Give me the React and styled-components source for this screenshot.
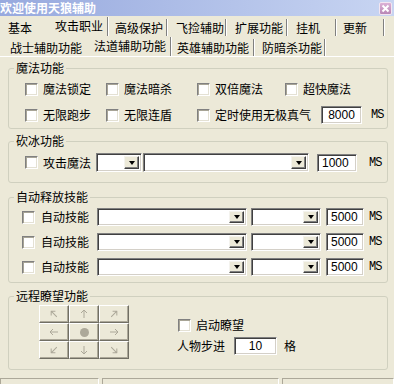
import React from 'react';
import styled, { createGlobalStyle } from 'styled-components';

const GlobalStyle = createGlobalStyle`
  html, body {
    margin: 0;
    padding: 0;
    background: #ece9d8;
  }
  body {
    font-family: "Noto Sans CJK SC", "Noto Sans", sans-serif;
    font-size: 12px;
    color: #000;
  }
`;

const Window = styled.div`
  width: 394px;
  height: 384px;
  overflow: hidden;
  display: flex;
  flex-direction: column;
  background: #ece9d8;
`;

const TitleBar = styled.div`
  flex: none;
  height: 16px;
  display: flex;
  align-items: center;
  justify-content: space-between;
  padding-right: 2px;
  background: linear-gradient(to right, #97a9de, #c8d5f2);
  color: #fff;
  font-weight: bold;
  font-size: 12px;
  line-height: 16px;
`;

const CloseButton = styled.div`
  width: 13px;
  height: 13px;
  box-sizing: border-box;
  display: flex;
  align-items: center;
  justify-content: center;
  border: 1px solid #f3e6f1;
  border-radius: 2px;
  background: linear-gradient(#dcb2d6, #b887b6);
`;

const TabBar = styled.div`
  flex: none;
  height: 20px;
  display: flex;
  align-items: flex-end;
`;

const Tab = styled.div`
  flex: none;
  box-sizing: border-box;
  width: ${(p) => p.$w}px;
  height: ${(p) => (p.$selected ? 19 : 17)}px;
  padding-left: ${(p) => p.$pad}px;
  line-height: 17px;
  white-space: nowrap;
  border-right: ${(p) => (p.$sep ? '1px solid #fff' : 'none')};
  box-shadow: ${(p) => (p.$sep ? 'inset -1px 0 #808080' : 'none')};
`;

const Content = styled.div`
  display: flex;
  flex-direction: column;
  padding-left: 8px;
  border-top: 1px solid #fff;
`;

const Group = styled.fieldset`
  flex: none;
  margin: ${(p) => p.$top}px 0 0 0;
  width: 380px;
  height: ${(p) => p.$h}px;
  box-sizing: border-box;
  padding: ${(p) => p.$pt}px 0 0 0;
  border: 1px solid #d0d0bf;
  border-radius: 3px;
  min-width: 0;
`;

const Legend = styled.legend`
  margin-left: 5px;
  padding: 0 2px;
  font-size: 12px;
  line-height: 14px;
`;

const Row = styled.div`
  display: flex;
  align-items: center;
  height: ${(p) => p.$h || 18}px;
  padding-left: ${(p) => p.$indent || 0}px;
  margin-top: ${(p) => p.$gap || 0}px;
`;

const CheckItem = styled.label`
  flex: none;
  display: flex;
  align-items: center;
  gap: ${(p) => p.$gap || 5}px;
  width: ${(p) => (p.$w ? `${p.$w}px` : 'auto')};
  margin-left: ${(p) => p.$ml || 0}px;
  white-space: nowrap;
  line-height: 16px;
`;

const Box = styled.span`
  flex: none;
  width: 13px;
  height: 13px;
  box-sizing: border-box;
  background: #fff;
  border: 1px solid;
  border-color: #808080 #fff #fff #808080;
  box-shadow: inset 1px 1px #a7a496, inset -1px -1px #e4e1d4;
`;

const Field = styled.div`
  flex: none;
  box-sizing: border-box;
  width: ${(p) => p.$w}px;
  height: ${(p) => p.$h || 18}px;
  margin-left: ${(p) => p.$ml || 0}px;
  padding: 0 4px;
  background: #fff;
  border: 1px solid;
  border-color: #808080 #fff #fff #808080;
  box-shadow: inset 1px 1px #404040, inset -1px -1px #d4d0c8;
  font-family: "Liberation Sans Narrow", "Liberation Sans", Arial, sans-serif;
  font-size: 12px;
  line-height: 16px;
  text-align: ${(p) => p.$align || 'left'};
`;

const Combo = styled.div`
  flex: none;
  box-sizing: border-box;
  width: ${(p) => p.$w}px;
  height: ${(p) => p.$h || 18}px;
  margin-left: ${(p) => p.$ml || 0}px;
  display: flex;
  justify-content: flex-end;
  padding: 2px;
  background: #fff;
  border: 1px solid;
  border-color: #808080 #fff #fff #808080;
  box-shadow: inset 1px 1px #404040, inset -1px -1px #d4d0c8;
`;

const DropButton = styled.div`
  width: 15px;
  height: 100%;
  box-sizing: border-box;
  display: flex;
  align-items: center;
  justify-content: center;
  background: #ece9d8;
  border: 1px solid;
  border-color: #f4f3ee #404040 #404040 #f4f3ee;
  box-shadow: inset -1px -1px #808080;

  &::after {
    content: '';
    width: 0;
    height: 0;
    border-left: 3.5px solid transparent;
    border-right: 3.5px solid transparent;
    border-top: 4px solid #000;
  }
`;

const Unit = styled.span`
  flex: none;
  margin-left: ${(p) => p.$ml || 0}px;
  font-family: "Liberation Mono", "DejaVu Sans Mono", monospace;
  font-size: 12px;
  letter-spacing: -1px;
  line-height: 16px;
`;

const Text = styled.span`
  flex: none;
  margin-left: ${(p) => p.$ml || 0}px;
  white-space: nowrap;
  line-height: 16px;
`;

const ScoutBody = styled.div`
  display: flex;
  padding-left: 30px;
`;

const Pad = styled.div`
  display: grid;
  grid-template-columns: repeat(3, 30px);
  grid-template-rows: repeat(3, 18px);
`;

const PadButton = styled.div`
  box-sizing: border-box;
  display: flex;
  align-items: center;
  justify-content: center;
  background: #ece9d8;
  border: 1px solid;
  border-color: #fff #716f64 #716f64 #fff;
  box-shadow: inset -1px -1px #aca899;
`;

const Arrow = styled.svg`
  width: 10px;
  height: 10px;
  transform: rotate(${(p) => p.$deg}deg);
`;

const Dot = styled.span`
  width: 9px;
  height: 9px;
  border-radius: 50%;
  background: #aca899;
`;

const ScoutSide = styled.div`
  display: flex;
  flex-direction: column;
  margin-left: 48px;
  padding-top: 11px;
`;

const StatusBar = styled.div`
  flex: none;
  display: flex;
  gap: 3px;
  height: 20px;
  margin-top: 8px;
`;

const StatusPane = styled.div`
  flex: none;
  width: ${(p) => p.$w}px;
  box-sizing: border-box;
  border: 1px solid;
  border-color: #aca899 #fff #fff #aca899;
`;

const topTabs = [
  { label: '基本', w: 46, pad: 8 },
  { label: '攻击职业', w: 63, pad: 9, selected: true },
  { label: '高级保护', w: 59, pad: 6 },
  { label: '飞捡辅助', w: 59, pad: 8 },
  { label: '扩展功能', w: 61, pad: 8 },
  { label: '挂机', w: 49, pad: 8 },
  { label: '更新', w: 48, pad: 6 },
];

const subTabs = [
  { label: '战士辅助功能', w: 86, pad: 10 },
  { label: '法道辅助功能', w: 86, pad: 8, selected: true },
  { label: '英雄辅助功能', w: 83, pad: 5 },
  { label: '防暗杀功能', w: 71, pad: 7 },
];

function Tabs({ items }) {
  return (
    <TabBar>
      {items.map((t, i) => {
        const next = items[i + 1];
        return (
          <Tab
            key={t.label}
            $w={t.w}
            $pad={t.pad}
            $selected={t.selected}
            $sep={!(next && next.selected)}
          >
            {t.label}
          </Tab>
        );
      })}
    </TabBar>
  );
}

function Check({ children, ...props }) {
  return (
    <CheckItem {...props}>
      <Box />
      {children}
    </CheckItem>
  );
}

const ArrowIcon = ({ deg }) => (
  <Arrow $deg={deg} viewBox="0 0 10 10">
    <path d="M1 5H9M6 2L9 5L6 8" fill="none" stroke="#aca899" strokeWidth="1" />
  </Arrow>
);

const padCells = [225, 270, 315, 180, null, 0, 135, 90, 45];

const App = () => (
  <Window>
    <GlobalStyle />
    <TitleBar>
      <span>欢迎使用天狼辅助</span>
      <CloseButton>
        <svg width="9" height="9" viewBox="0 0 9 9">
          <path d="M1.5 1.5L7.5 7.5M7.5 1.5L1.5 7.5" stroke="#fff" strokeWidth="2" />
        </svg>
      </CloseButton>
    </TitleBar>
    <Tabs items={topTabs} />
    <Tabs items={subTabs} />
    <Content>
      <Group $top={4} $h={68} $pt={5}>
        <Legend>魔法功能</Legend>
        <Row $indent={16}>
          <Check $w={81}>魔法锁定</Check>
          <Check $w={91}>魔法暗杀</Check>
          <Check $w={88}>双倍魔法</Check>
          <Check>超快魔法</Check>
        </Row>
        <Row $indent={16} $gap={8}>
          <Check $w={81}>无限跑步</Check>
          <Check $w={91}>无限连盾</Check>
          <Check>定时使用无极真气</Check>
          <Field $w={41} $ml={10} $align="center">8000</Field>
          <Unit $ml={9}>MS</Unit>
        </Row>
      </Group>

      <Group $top={5} $h={49} $pt={5}>
        <Legend>砍冰功能</Legend>
        <Row $indent={16} $h={19}>
          <Check>攻击魔法</Check>
          <Combo $w={46} $h={19} $ml={5}>
            <DropButton />
          </Combo>
          <Combo $w={166} $h={19} $ml={1}>
            <DropButton />
          </Combo>
          <Field $w={40} $ml={8}>1000</Field>
          <Unit $ml={12}>MS</Unit>
        </Row>
      </Group>

      <Group $top={7} $h={93} $pt={4}>
        <Legend>自动释放技能</Legend>
        {[0, 1, 2].map((i) => (
          <Row key={i} $indent={13} $gap={i ? 7 : 0}>
            <Check $gap={6}>自动技能</Check>
            <Combo $w={150} $ml={8}>
              <DropButton />
            </Combo>
            <Combo $w={70} $ml={4}>
              <DropButton />
            </Combo>
            <Field $w={38} $ml={5}>5000</Field>
            <Unit $ml={5}>MS</Unit>
          </Row>
        ))}
      </Group>

      <Group $top={6} $h={81} $pt={2}>
        <Legend>远程瞭望功能</Legend>
        <ScoutBody>
          <Pad>
            {padCells.map((deg, i) => (
              <PadButton key={i}>{deg === null ? <Dot /> : <ArrowIcon deg={deg} />}</PadButton>
            ))}
          </Pad>
          <ScoutSide>
            <Row>
              <Check $ml={1}>启动瞭望</Check>
            </Row>
            <Row $gap={3}>
              <Text>人物步进</Text>
              <Field $w={43} $ml={9} $align="center">10</Field>
              <Text $ml={7}>格</Text>
            </Row>
          </ScoutSide>
        </ScoutBody>
      </Group>
    </Content>
    <StatusBar>
      <StatusPane $w={99} />
      <StatusPane $w={177} />
      <StatusPane $w={112} />
    </StatusBar>
  </Window>
);

export default App;
